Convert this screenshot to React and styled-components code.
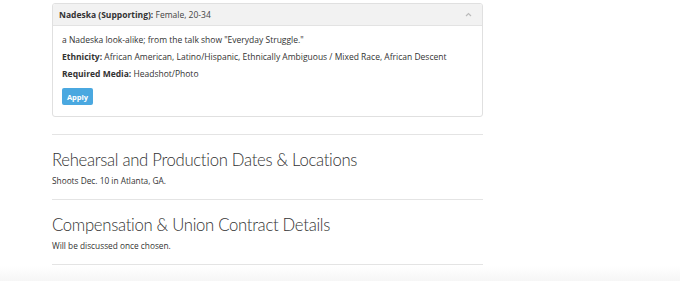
import styled, { createGlobalStyle } from "styled-components";

const Global = createGlobalStyle`
  body {
    margin: 0;
    background: #fff;
    font-family: "Open Sans", "Liberation Sans", sans-serif;
    color: #333;
  }
`;

const Page = styled.div`
  min-height: 281px;
  display: flex;
  flex-direction: column;
`;

const Content = styled.div`
  width: 431px;
  margin-left: 52px;
  padding-top: 3px;
`;

const Panel = styled.div`
  border: 1px solid #e0e0e0;
  border-radius: 3px;
  overflow: hidden;
`;

const PanelHeader = styled.div`
  height: 21px;
  background: #f2f2f2;
  border-bottom: 1px solid #e3e3e3;
  display: flex;
  align-items: center;
  justify-content: space-between;
  padding: 0 10px 0 6px;
  font-size: 8.5px;
  color: #444;
  b {
    font-weight: 700;
    color: #333;
  }
`;

const PanelBody = styled.div`
  padding: 9px 9px 11px 9px;
  font-size: 8.5px;
  color: #333;
  p {
    margin: 0 0 7px;
    line-height: 10px;
  }
  b {
    font-weight: 700;
  }
`;

const ApplyButton = styled.button`
  display: block;
  margin-top: 9px;
  width: 31px;
  height: 17px;
  border: none;
  border-radius: 2px;
  background: #4aa8e0;
  color: #fff;
  font-family: inherit;
  font-size: 7.5px;
  font-weight: 700;
  padding: 0;
`;

const Section = styled.div`
  border-top: 1px solid #e4e4e4;
  margin-top: ${(p) => (p.first ? 17 : 0)}px;
  padding: 15px 0 13px;
`;

const Heading = styled.h2`
  margin: 0;
  font-family: Lato, "Open Sans", sans-serif;
  font-size: 16.7px;
  letter-spacing: -0.3px;
  font-weight: 300;
  color: #333;
  line-height: 20px;
`;

const Note = styled.p`
  margin: 6px 0 0;
  font-size: 8.3px;
  line-height: 10px;
  color: #333;
`;

const Divider = styled.div`
  border-top: 1px solid #e4e4e4;
`;

const Footer = styled.div`
  flex: 1;
  margin-top: 1px;
  background: linear-gradient(#fff, #f6f6f6);
`;

const Chevron = () => (
  <svg width="7" height="5" viewBox="0 0 7 5">
    <path d="M1 4 L3.5 1.5 L6 4" fill="none" stroke="#bbb" strokeWidth="1.2" />
  </svg>
);

export default function App() {
  return (
    <Page>
      <Global />
      <Content>
        <Panel>
          <PanelHeader>
            <span>
              <b>Nadeska (Supporting):</b> Female, 20-34
            </span>
            <Chevron />
          </PanelHeader>
          <PanelBody>
            <p>a Nadeska look-alike; from the talk show "Everyday Struggle."</p>
            <p>
              <b>Ethnicity:</b> African American, Latino/Hispanic, Ethnically
              Ambiguous / Mixed Race, African Descent
            </p>
            <p>
              <b>Required Media:</b> Headshot/Photo
            </p>
            <ApplyButton>Apply</ApplyButton>
          </PanelBody>
        </Panel>
        <Section first>
          <Heading>Rehearsal and Production Dates &amp; Locations</Heading>
          <Note>Shoots Dec. 10 in Atlanta, GA.</Note>
        </Section>
        <Section>
          <Heading>Compensation &amp; Union Contract Details</Heading>
          <Note>Will be discussed once chosen.</Note>
        </Section>
        <Divider />
      </Content>
      <Footer />
    </Page>
  );
}
